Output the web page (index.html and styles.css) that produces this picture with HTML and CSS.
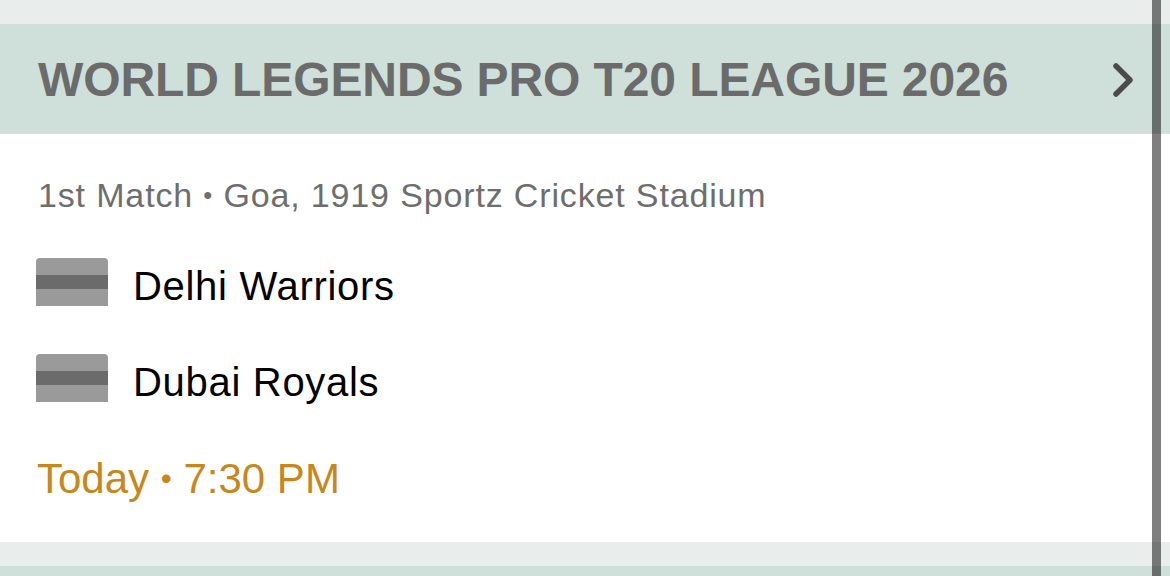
FILE: index.html
```html
<!DOCTYPE html>
<html>
<head>
<meta charset="utf-8">
<link rel="stylesheet" href="styles.css">
</head>
<body>
<div class="page">
  <div class="gap"></div>
  <section class="card">
    <header class="card-head">
      <h1 class="league">WORLD LEGENDS PRO T20 LEAGUE 2026</h1>
      <svg class="chev" width="26" height="38" viewBox="0 0 26 38"><path d="M6 5 L20 19 L6 33" fill="none" stroke="#4a4a4a" stroke-width="5.5" stroke-linecap="round" stroke-linejoin="round"/></svg>
    </header>
    <div class="card-body">
      <p class="meta">1st Match <span class="dot">•</span> Goa, 1919 Sportz Cricket Stadium</p>
      <div class="team"><span class="flag"><i></i></span><span class="tname">Delhi Warriors</span></div>
      <div class="team"><span class="flag"><i></i></span><span class="tname">Dubai Royals</span></div>
      <p class="time">Today <span class="dot">•</span> 7:30 PM</p>
    </div>
  </section>
  <div class="gap gap-bottom"></div>
  <div class="next-head"></div>
  <div class="scrollbar"></div>
</div>
</body>
</html>
```

FILE: styles.css
```css
html, body {
  margin: 0;
  padding: 0;
  background: #ffffff;
}
.page {
  position: relative;
  width: 1170px;
  height: 576px;
  overflow: hidden;
  font-family: "Liberation Sans", Arial, sans-serif;
  display: flex;
  flex-direction: column;
}
.gap {
  height: 24px;
  background: #e9eeed;
  flex: none;
}
.card {
  flex: none;
  background: #ffffff;
}
.card-head {
  height: 110px;
  background: #cfdfda;
  display: flex;
  align-items: center;
  justify-content: space-between;
  padding: 0 34px 0 38px;
  box-sizing: border-box;
  border-bottom: 1px solid #d5e2de;
}
.league {
  margin: 0;
  font-size: 48px;
  font-weight: 700;
  color: #6b6b6b;
  letter-spacing: -0.1px;
  padding-top: 2px;
}
.chev {
  display: block;
  margin-top: 2px;
}
.card-body {
  height: 408px;
  box-sizing: border-box;
  padding: 0 0 0 36px;
  display: flex;
  flex-direction: column;
}
.meta {
  margin: 41px 0 0 2px;
  font-size: 34px;
  letter-spacing: 0.85px;
  line-height: 40px;
  color: #6e6e6e;
}
.dot {
  font-size: 0.75em;
  vertical-align: 0.12em;
}
.team {
  display: flex;
  align-items: center;
  gap: 25px;
  margin-top: 43px;
  height: 48px;
}
.team + .team {
  margin-top: 48px;
}
.flag {
  width: 72px;
  height: 48px;
  background: #9a9a9a;
  border-radius: 4px 4px 0 0;
  display: flex;
  align-items: center;
  flex: none;
}
.flag i {
  display: block;
  width: 100%;
  height: 14px;
  background: #6b6b6b;
}
.tname {
  font-size: 40px;
  letter-spacing: 0.7px;
  color: #000000;
  line-height: 48px;
  padding-top: 8px;
}
.time {
  margin: 52px 0 0 1px;
  font-size: 42px;
  line-height: 48px;
  color: #c8871c;
}
.gap-bottom {
  height: 24px;
}
.next-head {
  flex: 1;
  background: #cfdfda;
}
.scrollbar {
  position: absolute;
  top: 0;
  bottom: 0;
  left: 1152px;
  width: 9px;
  background: rgba(0, 0, 0, 0.5);
}
```
